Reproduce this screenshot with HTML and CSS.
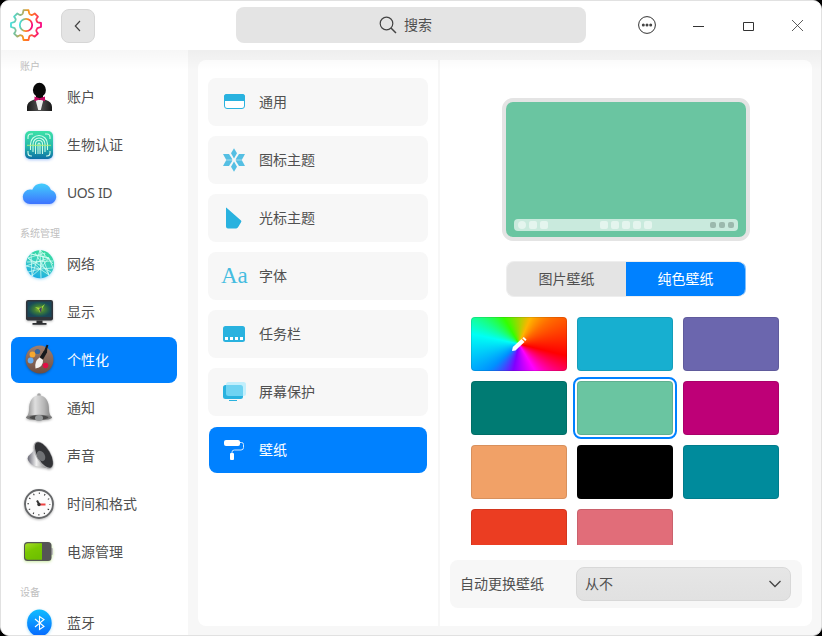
FILE: index.html
```html
<!DOCTYPE html>
<html lang="zh-CN">
<head>
<meta charset="utf-8">
<title>控制中心</title>
<link rel="stylesheet" href="styles.css">
</head>
<body>
<div class="window">
  <header class="titlebar">
    <div class="titlebar-left">
      <svg class="logo" viewBox="0 0 32 32">
        <defs><linearGradient id="rainbow" x1="0" y1=".4" x2="1" y2=".6"><stop offset="0" stop-color="#41e0de"/><stop offset=".25" stop-color="#8cb987"/><stop offset=".5" stop-color="#ff9012"/><stop offset=".72" stop-color="#ff5a3c"/><stop offset="1" stop-color="#f80084"/></linearGradient></defs>
        <g fill="none" stroke="url(#rainbow)" stroke-width="1.8" stroke-linejoin="round">
          <path d="M13.500 1.200h5l.7 3.200q.2.800 1 1.100l1 .4q.8.300 1.500-.2l2-1.200 3.200 3.200-1.400 2.100q-.4.700-.1 1.400l.5 1.200q.3.800 1.100 1l3 .6v4l-3 .8q-.8.200-1.100 1l-.5 1.200q-.3.700.1 1.400l1.400 2.100-3.200 3.200-2-1.200q-.7-.5-1.500-.2l-1 .4q-.8.300-1 1.100l-.7 3.200h-5l-.7-3.200q-.2-.8-1-1.100l-1-.4q-.8-.3-1.500.2l-2 1.200-3.200-3.200 1.400-2.100q.4-.7.1-1.400l-.5-1.200q-.3-.8-1.100-1L1 18v-4l3-.8q.8-.2 1.100-1l.5-1.200q.3-.7-.1-1.400L4.100 7.700l3.200-3.200 2 1.200q.7.500 1.500.2l1-.4q.8-.3 1-1.100z"/>
          <circle cx="16" cy="16" r="6.200"/>
        </g>
      </svg>
      <div class="back"><svg width="12" height="12" viewBox="0 0 12 12"><path d="M8 1 3.300 6 8 11" fill="none" stroke="#444" stroke-width="1.200"/></svg></div>
    </div>
    <div class="search">
      <svg width="18" height="18" viewBox="0 0 18 18" fill="none" stroke="#444" stroke-width="1.200"><circle cx="7.500" cy="7.500" r="6.300"/><path d="M12 12l5 5" stroke-width="1.500"/></svg>
      <span>搜索</span>
    </div>
    <div class="controls">
      <svg viewBox="0 0 20 20"><circle cx="9" cy="9" r="8.400" fill="none" stroke="#333"/><circle cx="5.300" cy="9" r="1.500" fill="#444"/><circle cx="9" cy="9" r="1.500" fill="#444"/><circle cx="12.700" cy="9" r="1.500" fill="#444"/></svg>
      <svg viewBox="0 0 20 20"><path d="M5 10.500h11" stroke="#333"/></svg>
      <svg viewBox="0 0 20 20"><path d="M5.500 6.500h10v8h-10z" fill="none" stroke="#333"/></svg>
      <svg viewBox="0 0 20 20"><path d="M4 4l11 11M15 4L4 15" stroke="#333" stroke-width=".8"/></svg>
    </div>
  </header>

  <div class="body">
    <nav class="sidebar">
      <h2 class="group first">账户</h2>
      <div class="nav-item">
        <svg viewBox="0 0 32 32">
          <defs><linearGradient id="suit"><stop stop-color="#181818"/><stop offset=".5" stop-color="#555"/><stop offset="1" stop-color="#181818"/></linearGradient></defs>
          <path d="M4 30v-4q0-5 6-7l3.500-1.500h6L23 19q6 2 6 7v4z" fill="url(#suit)"/>
          <path d="M12.500 18.500h8L17.800 29h-2.600z" fill="#eee"/>
          <ellipse cx="16.400" cy="9" rx="6.500" ry="7.200" fill="#090909"/><path d="M13 13h7v4l-3.500 2-3.500-2z" fill="#090909"/>
          <path d="M11.500 15.500l5 1.700 5.500-1.700v4.800L16.500 18.600l-5 1.700z" fill="#c70863"/>
        </svg><span>账户</span>
      </div>
      <div class="nav-item">
        <svg class="glow-blue" viewBox="0 0 32 32">
          <defs><linearGradient id="bio" x2="0" y2="1"><stop stop-color="#3de2a7"/><stop offset=".55" stop-color="#25b7ac"/><stop offset="1" stop-color="#0d6fa5"/></linearGradient></defs>
          <rect x="2" y="2" width="28" height="28" rx="5" fill="url(#bio)"/>
          <g fill="none" stroke="#cffbe9" stroke-width="1.100">
            <path d="M5 10V8q0-3 3-3h2M22 5h2q3 0 3 3v2M27 22v2q0 3-3 3h-1M9 27H8q-3 0-3-3v-2"/>
            <path d="M7.500 21v-6a8.500 8.500 0 0 1 17 0v6M10 23v-8a6 6 0 0 1 12 0v8M12.500 25V15a3.500 3.500 0 0 1 7 0v10M15 25V15q1-2 2 0v10"/>
          </g><path d="M4 16.300h24" stroke="#b5ef74" stroke-width=".9"/>
        </svg><span>生物认证</span>
      </div>
      <div class="nav-item">
        <svg class="glow-blue" viewBox="0 0 32 32">
          <defs><linearGradient id="cloud" x2="0" y2="1"><stop stop-color="#43cffc"/><stop offset="1" stop-color="#3d73ff"/></linearGradient></defs>
          <path d="M7 27a7.200 7.200 0 0 1 0-14.400q1.200-.2 2.300.2A10 10 0 0 1 28 12.900 7.200 7.200 0 0 1 26.500 27z" fill="url(#cloud)"/>
        </svg><span class="latin">UOS ID</span>
      </div>

      <h2 class="group">系统管理</h2>
      <div class="nav-item">
        <svg class="glow-cyan" viewBox="0 0 32 32">
          <defs><linearGradient id="net" x1=".7" x2=".3" y2="1"><stop stop-color="#35dc9b"/><stop offset=".5" stop-color="#3ccdc3"/><stop offset="1" stop-color="#16a9e5"/></linearGradient></defs>
          <circle cx="17" cy="16.300" r="14" fill="url(#net)"/>
          <g fill="none" stroke="#d9fff5" stroke-width=".8" opacity=".9"><path d="M8 6l18 4 4 10-13 1L5 10l17-5-5 16M3 18l14 3 9-11L8 6l1 22L17 2l1 28M17 21L5 24M17 21l9 6L17 2l13 14M4 14l26-1M5 10l23 14M12 5l14 22M17 21L9 28M3 18L26 10"/></g>
        </svg><span>网络</span>
      </div>
      <div class="nav-item">
        <svg class="shade" viewBox="0 0 32 32">
          <defs><radialGradient id="screen"><stop stop-color="#8fbd28"/><stop offset=".45" stop-color="#3f7c38"/><stop offset=".8" stop-color="#1f5a50"/><stop offset="1" stop-color="#1b4658"/></radialGradient></defs>
          <rect x="3" y="4" width="27" height="20.500" rx="2" fill="#30343a"/><rect x="4.500" y="5.500" width="24" height="15.500" fill="url(#screen)"/>
          <path d="M12 11l5 1 5-4-3 5-2 4-1-3z" fill="#a4dc3c"/><path d="M16 13l3-2-1 6z" fill="#453a66"/>
          <path d="M13.500 24.500h6V27h4v1.800h-14V27h4z" fill="#2b2c2f"/>
        </svg><span>显示</span>
      </div>
      <div class="nav-item active">
        <svg class="shade" viewBox="0 0 32 32">
          <defs><linearGradient id="wood" x2="0" y2="1"><stop stop-color="#a08070"/><stop offset="1" stop-color="#6d4d40"/></linearGradient></defs>
          <path d="M17 1.500C8 1.500 2.500 8 2.500 15.500S9 29.500 17 29.500 30.500 23 30.500 16q0-6-4-10-4-4.500-9.500-4.500z" fill="url(#wood)"/>
          <circle cx="14.500" cy="7.500" r="2.600" fill="#36659b"/><circle cx="9.500" cy="10.500" r="2.900" fill="#f5a82f"/><circle cx="7.600" cy="16.500" r="2.900" fill="#65adf3"/><circle cx="22.500" cy="21.500" r="2.800" fill="#e20f45"/>
          <path d="M24.500 1.500L17 13l3 2.500 4-7z" fill="#17191c"/><path d="M24.500 1l-2 5M22 7l-4 7" stroke="#17191c" stroke-width="2"/><path d="M16.500 13.500l3.500 2.500q.5 7-7.500 8.500-1.500-7 4-11z" fill="#f5f2ef"/>
        </svg><span>个性化</span>
      </div>
      <div class="nav-item">
        <svg class="shade" viewBox="0 0 32 32">
          <defs><linearGradient id="bell"><stop stop-color="#888"/><stop offset=".35" stop-color="#dedede"/><stop offset=".7" stop-color="#b5b5b5"/><stop offset="1" stop-color="#808080"/></linearGradient></defs>
          <circle cx="16" cy="3" r="1.800" fill="#a5a5a5"/><path d="M6 18Q6 4 16 3.500 26 4 26 18q.2 5 3 7.500H3Q5.800 23 6 18z" fill="url(#bell)"/>
          <ellipse cx="16" cy="25.500" rx="13" ry="2.800" fill="#7b7b7b"/><ellipse cx="16" cy="25.500" rx="9.500" ry="2.200" fill="#4a4a4a"/><ellipse cx="16" cy="26" rx="4" ry="3" fill="#979a9b"/>
        </svg><span>通知</span>
      </div>
      <div class="nav-item">
        <svg class="shade" viewBox="0 0 32 32">
          <defs><linearGradient id="horn"><stop stop-color="#666672"/><stop offset=".4" stop-color="#f2f2f2"/><stop offset="1" stop-color="#666"/></linearGradient></defs>
          <path d="M12 3Q12 11 7.500 14q-4.500 3-2 7 2.500 4.500 9 5.500 5 1 12 2z" fill="url(#horn)"/>
          <ellipse cx="20.500" cy="15.200" rx="7.300" ry="15.200" transform="rotate(-30 20.500 15.200)" fill="#a9a9ab"/><ellipse cx="20.900" cy="15" rx="6.300" ry="14.300" transform="rotate(-30 20.900 15)" fill="#323336"/><ellipse cx="18" cy="16" rx="3.800" ry="5.500" transform="rotate(-30 18 16)" fill="#6f7174"/>
        </svg><span>声音</span>
      </div>
      <div class="nav-item">
        <svg class="shade" viewBox="0 0 32 32">
          <circle cx="16" cy="16" r="14" fill="#fcfcfc" stroke="#66686a" stroke-width="1.900"/>
          <circle cx="16" cy="16" r="10.800" fill="none" stroke="#333" stroke-width="1.600" stroke-dasharray="1 4.655" stroke-dashoffset=".5"/>
          <path d="M16 16.500h6.500" stroke="#ee4343" stroke-width="2"/><path d="M16.500 17l-2.500-4.500" stroke="#333" stroke-width="2"/><circle cx="16" cy="16.500" r="1.700" fill="#333"/>
        </svg><span>时间和格式</span>
      </div>
      <div class="nav-item">
        <svg class="glow-green" viewBox="0 0 32 32">
          <defs><linearGradient id="charge" x2=".5" y2="1"><stop stop-color="#a6dc25"/><stop offset=".5" stop-color="#79c800"/><stop offset="1" stop-color="#6fc000"/></linearGradient></defs>
          <rect x="27" y="12" width="3" height="7" rx="1" fill="#bbb"/><rect x="1" y="6" width="27.500" height="19" rx="3.500" fill="#555"/><path d="M5 7.200h14v16.600H5q-3 0-3-3V10q0-2.800 3-2.800z" fill="url(#charge)"/>
        </svg><span>电源管理</span>
      </div>

      <h2 class="group">设备</h2>
      <div class="nav-item">
        <svg class="glow-cyan" viewBox="0 0 32 32">
          <defs><linearGradient id="bt" x2="0" y2="1"><stop stop-color="#10bdff"/><stop offset="1" stop-color="#0768ff"/></linearGradient></defs>
          <ellipse cx="16.400" cy="16" rx="12.300" ry="13.500" fill="url(#bt)"/><path d="M12 12l9 7.500-4.500 3V9.500l4.500 3-9 7.500" fill="none" stroke="#fff" stroke-width="1.100"/>
        </svg><span>蓝牙</span>
      </div>
    </nav>

    <main class="content">
      <section class="panel submenu">
        <div class="sub-item"><svg viewBox="0 0 24 24"><rect x="2.500" y="4.500" width="20" height="14" rx="2.500" fill="#fff" stroke="#29b2df"/><path d="M2 11V6.500Q2 4 4.500 4h16Q23 4 23 6.500V11z" fill="#29b2df"/></svg><span>通用</span></div>
        <div class="sub-item"><svg viewBox="0 0 24 24" fill="#55bfe3"><path d="M12 .2l3 5L12 10.500 9 5.200z"/><path d="M12 23.800l3-5-3-5.300-3 5.300z"/><path d="M1 6h6l3.500 5.500H4z"/><path d="M23 6h-6l-3.500 5.500H20z"/><path d="M1 18h6l3.500-5.500H4z"/><path d="M23 18h-6l-3.500-5.500H20z"/><path d="M4 11h6v2H4zM14 11h6v2h-6z" opacity=".5"/></svg><span>图标主题</span></div>
        <div class="sub-item"><svg viewBox="0 0 24 24"><path d="M4 2q0-.7.800-.1L19 14.500q.7.700.2 1.600l-3 5q-.7 1.300-2 1.300H6q-2 0-2-2z" fill="#29b2df"/></svg><span>光标主题</span></div>
        <div class="sub-item"><b class="font-icon">Aa</b><span>字体</span></div>
        <div class="sub-item"><svg viewBox="0 0 24 24"><rect x="1" y="4" width="22" height="16" rx="2.500" fill="#29b2df"/><path d="M3 15h3v3H3zM8 15h3v3H8zM13 15h3v3h-3zM18 15h3v3h-3z" fill="#fff"/></svg><span>任务栏</span></div>
        <div class="sub-item"><svg viewBox="0 0 24 24"><rect x="1" y="5" width="20" height="14" rx="2.500" fill="#29b2df"/><rect x="4" y="2" width="20" height="14" rx="2.500" fill="#9ee9ff" opacity=".6"/><path d="M7 20.500h8" stroke="#29b2df"/></svg><span>屏幕保护</span></div>
        <div class="sub-item selected"><svg viewBox="0 0 24 24"><rect x="2" y="2" width="16" height="6" rx="2" fill="#fff"/><path d="M18 4.500h1.500q2 0 2 2v3q0 2.500-2.500 2.500h-6.500q-2.500 0-2.500 2v2" fill="none" stroke="#cfe6ff"/><rect x="8" y="15" width="4" height="7" rx="1" fill="#fff"/></svg><span>壁纸</span></div>
      </section>

      <section class="panel wallpaper">
        <div class="preview">
          <div class="dock">
            <div class="apps"><i class="round"></i><i></i><i></i></div>
            <div class="apps"><i></i><i></i><i></i><i></i><i></i></div>
            <div class="tray"><i></i><i></i><i></i></div>
          </div>
        </div>
        <div class="tabs"><div class="tab">图片壁纸</div><div class="tab on">纯色壁纸</div></div>
        <div class="swatches">
          <div class="swatch picker"><svg width="16" height="16" viewBox="0 0 16 16" fill="#fff"><path d="M1 15l.8-4L10.500 3 13.500 6 4.500 14.500z"/><path d="M11.300 2.300L12.800 1 15.500 3.500 14.300 5z"/></svg></div>
          <div class="swatch sky"></div>
          <div class="swatch violet"></div>
          <div class="swatch pine"></div>
          <div class="swatch mint chosen"></div>
          <div class="swatch magenta"></div>
          <div class="swatch peach"></div>
          <div class="swatch black"></div>
          <div class="swatch teal"></div>
          <div class="swatch red"></div>
          <div class="swatch rose"></div>
        </div>
        <div class="setting">
          <span>自动更换壁纸</span>
          <div class="select"><span>从不</span><svg width="14" height="10" viewBox="0 0 14 10"><path d="M1.500 2L7 7.500 12.500 2" fill="none" stroke="#444" stroke-width="1.300"/></svg></div>
        </div>
      </section>
    </main>
  </div>
</div>
</body>
</html>
```
FILE: styles.css
```css
* { box-sizing: border-box; }

body {
  margin: 0;
  background: #000;
  color: #505050;
  font: 14px/20px "Noto Sans", "Noto Sans CJK SC", sans-serif;
}

svg { display: block; flex: none; overflow: visible; }

.window {
  display: flex;
  flex-direction: column;
  height: 636px;
  overflow: hidden;
  border: 1px solid #e1e1e1;
  border-radius: 9px;
  background: #f7f7f7;
}

/* Title bar */
.titlebar { display: flex; flex: none; height: 49px; background: #fff; }
.titlebar-left { display: flex; width: 235px; padding: 8px 0 0 9px; }
.logo { width: 32px; height: 32px; }
.back {
  display: flex;
  align-items: center;
  justify-content: center;
  width: 34px;
  height: 34px;
  margin-left: 19px;
  border: 1px solid #d6d6d6;
  border-radius: 8px;
  background: #e4e4e4;
}
.search {
  display: flex;
  align-items: center;
  justify-content: center;
  gap: 7px;
  width: 350px;
  height: 36px;
  margin-top: 6px;
  padding-right: 11px;
  border-radius: 8px;
  background: #e4e4e4;
}
.controls { display: flex; gap: 30px; padding: 15px 0 0 52px; }
.controls svg { width: 20px; height: 20px; }

.body { position: relative; display: flex; flex: 1; min-height: 0; }
.body::before {
  content: "";
  position: absolute;
  inset: 0 0 auto;
  height: 20px;
  background: linear-gradient(rgba(0, 0, 0, .035), transparent);
  pointer-events: none;
  z-index: 1;
}

/* Sidebar */
.sidebar {
  flex: none;
  width: 187px;
  padding: 0 11px 0 10px;
  overflow: hidden;
  background: #fff;
}
.group {
  height: 25px;
  margin: 0;
  padding: 9px 0 0 9px;
  color: #c0c0c0;
  font-size: 10px;
  font-weight: 400;
  line-height: 16px;
}
.group.first { height: 24px; padding-top: 8px; }
.nav-item {
  display: flex;
  align-items: center;
  gap: 12px;
  height: 46px;
  padding-left: 12px;
  border-radius: 8px;
}
.nav-item + .nav-item { margin-top: 2px; }
.nav-item svg { width: 32px; height: 32px; }
.nav-item.active { background: #0081ff; color: #fff; }
.latin { letter-spacing: -.4px; }
.shade { filter: drop-shadow(0 1px 1px rgba(0, 0, 0, .28)); }
.glow-blue { filter: drop-shadow(0 1px 1.5px rgba(40, 110, 240, .4)); }
.glow-cyan { filter: drop-shadow(0 1px 1.5px rgba(20, 170, 240, .4)); }
.glow-green { filter: drop-shadow(0 1px 1.5px rgba(120, 200, 20, .4)); }

/* Content */
.content { display: flex; flex: 1; gap: 2px; padding: 10px 9px 9px 10px; }
.panel { background: #fff; }

.submenu {
  display: flex;
  flex-direction: column;
  gap: 10px;
  width: 240px;
  padding: 18px 10px;
  border-radius: 8px 0 0 8px;
}
.sub-item {
  display: flex;
  align-items: center;
  gap: 13px;
  height: 48px;
  padding-left: 14px;
  border-radius: 8px;
  background: #f7f7f7;
}
.sub-item svg { width: 24px; height: 24px; }
.sub-item.selected {
  height: 46px;
  margin: 1px;
  padding-left: 13px;
  background: #0081ff;
  color: #fff;
}
.font-icon {
  width: 24px;
  margin-left: -1px;
  margin-right: 1px;
  color: #45bce0;
  font: 23px/24px "Liberation Serif", serif;
}

.wallpaper {
  display: flex;
  flex: 1;
  flex-direction: column;
  align-items: center;
  padding: 38px 10px 18px;
  border-radius: 0 8px 8px 0;
}
.preview {
  display: flex;
  align-items: flex-end;
  flex: none;
  width: 248px;
  height: 143px;
  padding: 0 8px 6px;
  border: 4px solid #e4e4e4;
  border-radius: 11px;
  background: #6ac5a1;
}
.dock {
  display: flex;
  align-items: center;
  justify-content: space-between;
  width: 224px;
  height: 12px;
  padding: 0 4px;
  border-radius: 4px;
  background: rgba(255, 255, 255, .64);
}
.apps, .tray { display: flex; gap: 3px; }
.apps i { width: 8px; height: 8px; border-radius: 2px; background: rgba(255, 255, 255, .5); }
.apps .round { border-radius: 50%; }
.apps:nth-child(2) { margin-left: 7px; margin-right: 13px; }
.tray i { width: 6px; height: 6px; border-radius: 2px; background: #9bb9ad; }

.tabs {
  display: flex;
  flex: none;
  width: 240px;
  height: 36px;
  margin-top: 20px;
  border: 1px solid #eee;
  border-right-color: #7fc0ff;
  border-radius: 8px;
  overflow: hidden;
  background: #e4e4e4;
}
.tab { flex: 1; text-align: center; line-height: 34px; }
.tab.on { background: #0081ff; color: #fff; }

.swatches {
  display: grid;
  grid-template-columns: repeat(3, 96px);
  grid-auto-rows: 54px;
  gap: 10px;
  flex: none;
  height: 228px;
  margin: 20px 0 15px;
  align-self: flex-start;
  padding-left: 21px;
  overflow: hidden;
}
.swatch { border: 1px solid rgba(0, 0, 0, .1); border-radius: 4px; }
.picker {
  display: flex;
  align-items: center;
  justify-content: center;
  background: conic-gradient(from 104deg, #f00, #f0f 45deg, #8000ff 88deg, #0090ff 125deg, #00fff5 178deg, #3f0 226deg, #ffb400 280deg, #ff6c00 308deg, #f00) border-box;
}
.sky { background-color: #17afd0; }
.violet { background-color: #6b66ae; }
.pine { background-color: #007b73; }
.mint { background-color: #6ac5a1; }
.magenta { background-color: #be0077; }
.peach { background-color: #f1a167; }
.black { background-color: #000; }
.teal { background-color: #008b9c; }
.red { background-color: #eb3d22; }
.rose { background-color: #e16d79; }
.chosen { outline: 2px solid #0081ff; outline-offset: 2px; }

.setting {
  display: flex;
  align-items: center;
  justify-content: space-between;
  flex: none;
  width: 352px;
  height: 48px;
  padding: 0 11px 0 10px;
  border-radius: 8px;
  background: #f7f7f7;
}
.select {
  display: flex;
  align-items: center;
  justify-content: space-between;
  width: 215px;
  height: 34px;
  padding: 0 8px;
  border: 1px solid #d8d8d8;
  border-radius: 8px;
  background: linear-gradient(#e6e6e6, #e1e1e1);
}
```
